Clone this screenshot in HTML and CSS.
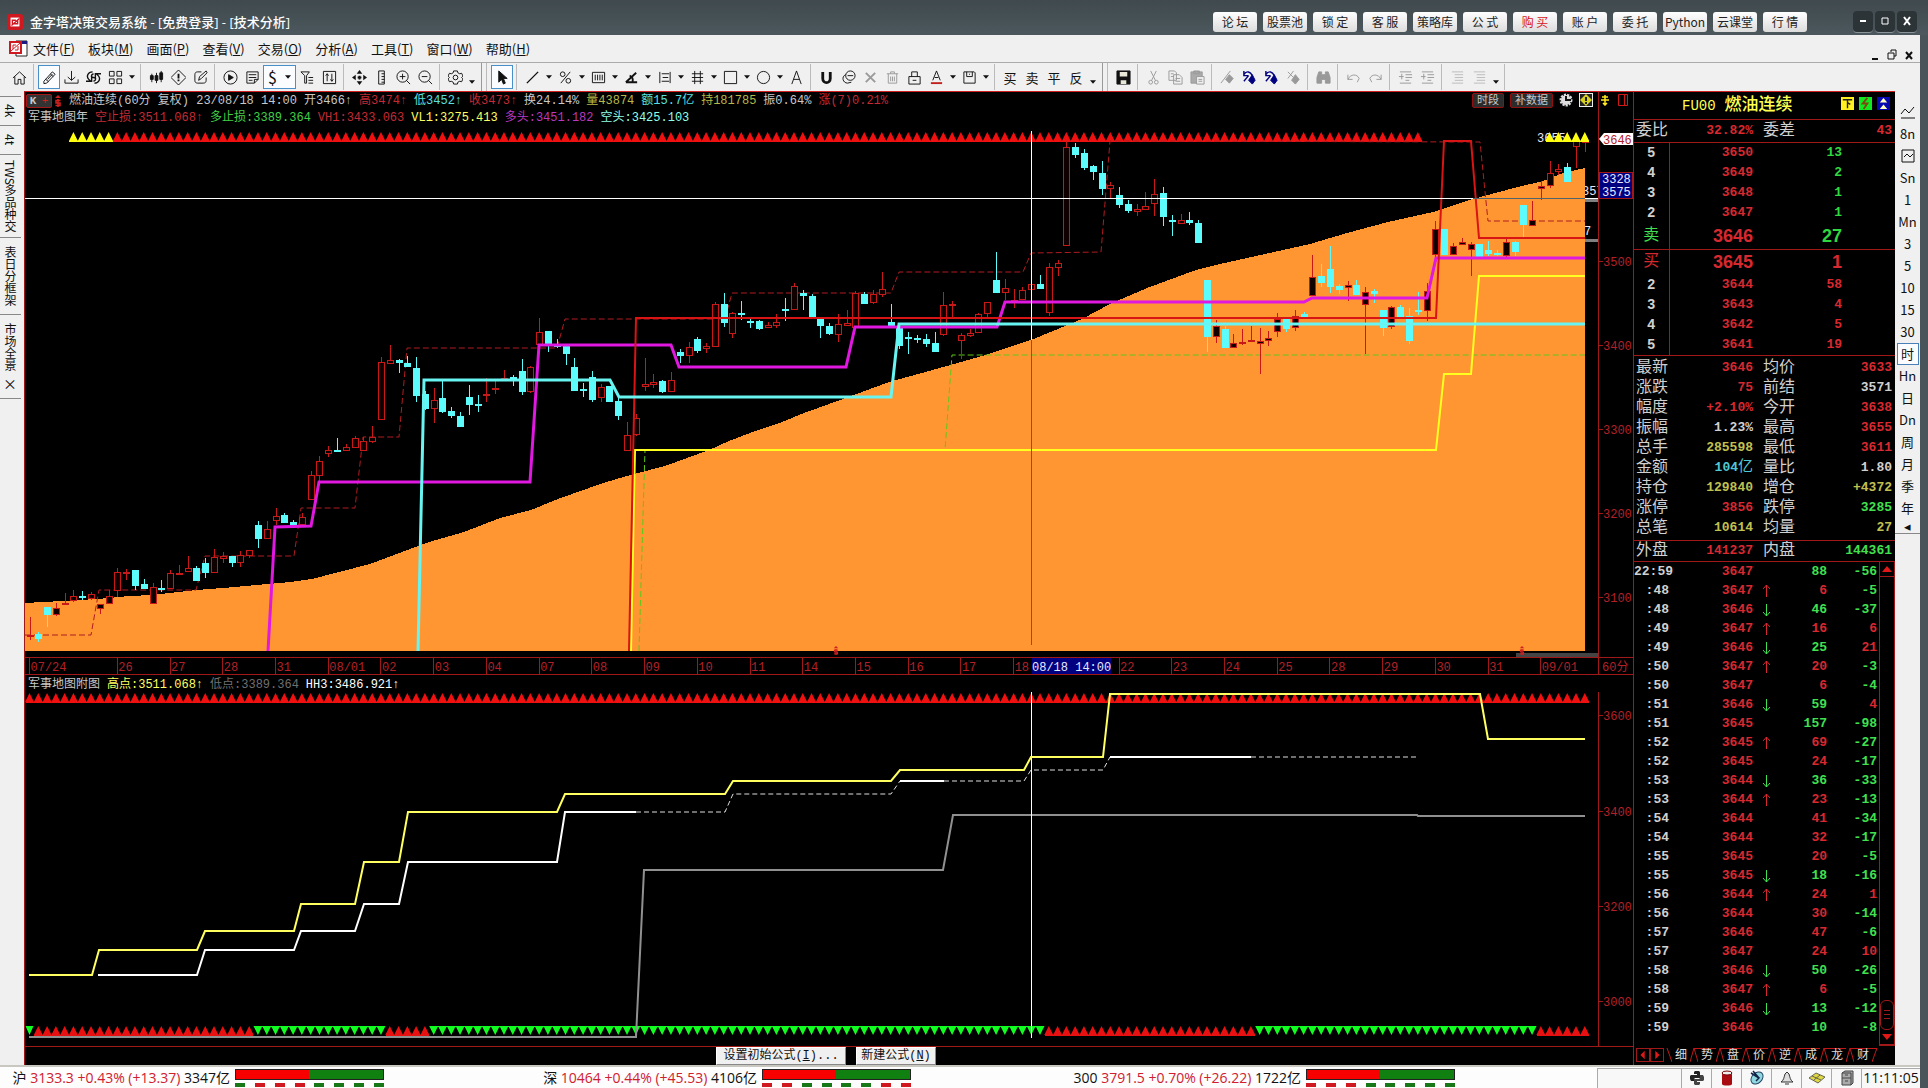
FILE: index.html
```html
<!DOCTYPE html>
<html lang="zh-CN">
<head>
    <meta charset="UTF-8">
    <meta name="viewport" content="width=device-width, initial-scale=1.0">
    <title>金字塔决策交易系统</title>
    <link rel="stylesheet" href="styles.css">
</head>
<body>
    <svg class="sprite" aria-hidden="true">
        <symbol id="home" viewBox="0 0 16 16"><path d="M1 8.500L8 2l7 6.500M3 7v8h3.500v-5h3v5H13V7"/></symbol>
        <symbol id="pencil" viewBox="0 0 16 16"><path d="M2 12l9-10 3 2.500L5 14l-3 .5zM4 10l3 2.500M9 4.500l3 2.500M6 10l5-5.500"/></symbol>
        <symbol id="down" viewBox="0 0 16 16"><path d="M8 1v10M4 7.500L8 11l4-3.500M1 10v4h14v-4"/></symbol>
        <symbol id="refresh" viewBox="0 0 16 16"><path d="M7 2C2 2 0 7 3 10l2 2M0 12h6V7M9 14c5 0 7-5 4-8l-2-2M16 4h-6v5M8 4c-3 1-3 4 0 4s3 3 0 4" stroke-width="1.500"/></symbol>
        <symbol id="grid4" viewBox="0 0 16 16"><path d="M1.500 1.500h5v5h-5zM9.500 1.500h5v5h-5zM1.500 9.500h5v5h-5zM9.500 9.500h5v5h-5z"/></symbol>
        <symbol id="candles" viewBox="0 0 16 16"><path d="M3 4v9M8 3v11M13 1v12"/><path class="f" d="M1.500 6h3v4h-3zM6.500 6h3v5h-3zM11.500 3h3v7h-3z"/></symbol>
        <symbol id="alert" viewBox="0 0 16 16"><path d="M8 0l8 8-8 8-8-8z"/><path d="M8 4v5M8 10v2" stroke-width="2"/></symbol>
        <symbol id="edit" viewBox="0 0 16 16"><path d="M9 2H5C3 2 2 3 2 5v6c0 2 1 3 3 3h6c2 0 3-1 3-3V8M6 11l1-4 7-6 1 2-6 6z"/></symbol>
        <symbol id="play" viewBox="0 0 16 16"><circle cx="8" cy="8" r="7"/><path class="f" d="M6 5l5 3-5 3z"/></symbol>
        <symbol id="note" viewBox="0 0 16 16"><path d="M10 14H2V2h12v8zM10 14v-4h4M4 5h8M4 8h8M4 11h4"/></symbol>
        <symbol id="filter" viewBox="0 0 16 16"><path d="M1 2h9L7 6v8H5V6zM9 8h5M9 11h5M9 14h5"/></symbol>
        <symbol id="updown" viewBox="0 0 16 16"><path d="M1.500 1.500h13v13h-13zM5.500 12V4M4 6l1.500-2L7 6M10.500 4v8M9 10l1.500 2 1.500-2"/></symbol>
        <symbol id="move" viewBox="0 0 16 16"><path class="f" d="M8 0l3 4H5zM8 16l3-4H5zM0 8l4-3v6zM16 8l-4-3v6zM7 6h2v1h1v2H9v1H7V9H6V7h1z" stroke="none"/></symbol>
        <symbol id="ruler" viewBox="0 0 16 16"><path d="M5 1h6v14H5zM8 4h3M8 7h3M8 10h3M8 13h3"/></symbol>
        <symbol id="zin" viewBox="0 0 16 16"><circle cx="7" cy="7" r="6"/><path d="M11 11l4 4M4 7h6M7 4v6"/></symbol>
        <symbol id="zout" viewBox="0 0 16 16"><circle cx="7" cy="7" r="6"/><path d="M11 11l4 4M4 7h6"/></symbol>
        <symbol id="gear" viewBox="0 0 16 16"><path d="M6 1h4l.5 2 2 1 2-.5 1.500 3L14.500 8l1.500 1.500-1.500 3-2-.5-2 1-.5 2H6l-.5-2-2-1-2 .5-1.500-3L1.500 8 0 6.500l1.500-3 2 .5 2-1z"/><circle cx="8" cy="8" r="2.500"/></symbol>
        <symbol id="cursor" viewBox="0 0 16 16"><path class="f" d="M4 1l9 8H9l2 5-2 1-2-5-3 3z"/></symbol>
        <symbol id="line" viewBox="0 0 16 16"><path d="M2 14L14 2" stroke-width="1.500"/></symbol>
        <symbol id="percent" viewBox="0 0 16 16"><circle cx="5" cy="4.500" r="2.500"/><circle cx="11" cy="11.500" r="2.500"/><path d="M13 2L3 14"/></symbol>
        <symbol id="bars" viewBox="0 0 16 16"><path d="M1.500 2.500h13v11h-13zM4.500 5v6M7 5v6M9.500 5v6M12 5v6"/></symbol>
        <symbol id="angle" viewBox="0 0 16 16"><path d="M2 13h12M2 13L13 3M6 6c3 1 4 4 3 7" stroke-width="2"/></symbol>
        <symbol id="levels" viewBox="0 0 16 16"><path d="M3 2v12M5 4h8M6 8h6M5 12h8M14 2v12"/></symbol>
        <symbol id="hash" viewBox="0 0 16 16"><path d="M5 1v14M11 1v14M2 4h12M2 8h12M2 12h12"/></symbol>
        <symbol id="rect" viewBox="0 0 16 16"><path d="M1.500 1.500h13v13h-13z"/></symbol>
        <symbol id="circle" viewBox="0 0 16 16"><circle cx="8" cy="8" r="6.500"/></symbol>
        <symbol id="letter" viewBox="0 0 16 16"><path d="M3 15L8 1l5 14M5 10h6"/></symbol>
        <symbol id="magnet" viewBox="0 0 16 16"><path d="M4 2v7c0 6 8 6 8 0V2" stroke-width="3"/></symbol>
        <symbol id="link" viewBox="0 0 16 16"><circle cx="10" cy="6" r="5"/><path d="M5 5C0 7 2 14 7 14l4-1M7 6h6"/></symbol>
        <symbol id="cross" viewBox="0 0 16 16"><path d="M3 3l10 10M13 3L3 13" stroke-width="2"/></symbol>
        <symbol id="trash" viewBox="0 0 16 16"><path d="M2 4h12M6 4V2h4v2M3.500 4v10h9V4M6 7v5M8 7v5M10 7v5"/></symbol>
        <symbol id="lock" viewBox="0 0 16 16"><path d="M2 7h12v8H2zM5 7V2h6v5M6 11h4"/></symbol>
        <symbol id="color" viewBox="0 0 16 16"><path d="M4 11L8 1l4 10M6 8h4"/><path d="M2 14h12" stroke="#c02020" stroke-width="2"/></symbol>
        <symbol id="keep" viewBox="0 0 16 16"><path d="M2 2h11l1 1v11H2zM5 2v5h6V2M8 4v1"/></symbol>
        <symbol id="floppy" viewBox="0 0 16 16"><path class="f" d="M1 1h14v14H1z"/><path d="M4 2h8v5H4zM5 11h6v4H5z" fill="#e8e8d8" stroke="none"/></symbol>
        <symbol id="cut" viewBox="0 0 16 16"><path d="M5 1l5 10M11 1L6 11"/><circle cx="5" cy="13" r="2"/><circle cx="11" cy="13" r="2"/></symbol>
        <symbol id="copy" viewBox="0 0 16 16"><path d="M1 1h6l2 2v8H1zM6 5h6l3 3v7H6zM8 9h5M8 12h5M3 4h3M3 7h3"/></symbol>
        <symbol id="paste" viewBox="0 0 16 16"><path d="M1 2h12v12H1zM4 1h6v3H4z" fill="#aaa"/><path d="M7 7h8v8H7zM9 10h4M9 12h4" fill="#f0f0f0"/></symbol>
        <symbol id="flag" viewBox="0 0 16 16"><path d="M1 14L11 1"/><path class="f" d="M10 5l4 4-4 5-4-4z"/></symbol>
        <symbol id="flagr" viewBox="0 0 16 16"><path d="M2 5c3-5 7-3 9 1M2 1v5h5M2 12l5-6" stroke-width="1.500"/><path class="f" d="M11 5l3 6-3 4-4-4z"/></symbol>
        <symbol id="flagx" viewBox="0 0 16 16"><path d="M2 2l6 6M8 1L2 9"/><path class="f" d="M10 5l4 5-4 5-4-4z"/></symbol>
        <symbol id="find" viewBox="0 0 16 16"><path class="f" d="M3 2h3v3h4V2h3l2 6v6h-5v-4H6v4H1V8z"/></symbol>
        <symbol id="undo" viewBox="0 0 16 16"><path d="M2 5v5h5M2 10c3-6 10-6 12-1l-2 4"/></symbol>
        <symbol id="redo" viewBox="0 0 16 16"><path d="M14 5v5H9M14 10C11 4 4 4 2 9l2 4"/></symbol>
        <symbol id="indent" viewBox="0 0 16 16"><path d="M2 2h12M8 5h7M8 8h7M8 11h4M2 14h12M1 7h5M4 4v6" /></symbol>
        <symbol id="list" viewBox="0 0 16 16"><path d="M2 2h12M5 5h9M5 8h9M5 11h9M2 14h12" stroke="#bbb"/></symbol>
        <symbol id="logo" viewBox="0 0 18 18"><rect width="18" height="18" rx="3" fill="#d01820"/><path d="M4 4h10v10H4z" fill="#fff" stroke="none"/><path d="M6 11V7h4M12 7v4H8M5 13L14 5" stroke="#d01820" stroke-width="1.500"/></symbol>
        <symbol id="signal" viewBox="0 0 8 12"><path d="M1 3l3-3 3 3z" fill="#d02020"/><path d="M6.500 5.500H2v2.500h4v2.500H1.500M4 4v8" stroke="#d02020" stroke-width="1.500"/></symbol>
    </svg>

    <header class="titlebar">
        <svg class="logo"><use href="#logo"/></svg>
        <h1>金字塔决策交易系统 - [免费登录] - [技术分析]</h1>
        <nav class="quick">
            <button>论 坛</button><button>股票池</button><button>锁 定</button><button>客 服</button><button>策略库</button><button>公 式</button><button class="buy">购 买</button><button>账 户</button><button>委 托</button><button>Python</button><button>云课堂</button><button>行 情</button>
        </nav>
        <div class="winbtns">
            <button aria-label="最小化"><svg viewBox="0 0 10 10"><path d="M2 5h6" stroke-width="2"/></svg></button>
            <button aria-label="最大化"><svg viewBox="0 0 10 10"><path d="M2 2h6v6H2z"/></svg></button>
            <button aria-label="关闭"><svg viewBox="0 0 10 10"><path d="M2 1l6 8M8 1L2 9" stroke-width="2"/></svg></button>
        </div>
    </header>

    <div class="frame">
        <div class="menubar">
            <svg class="doc" viewBox="0 0 20 18"><path d="M8 1h11v15H8z" fill="#fff" stroke="#222"/><path d="M8 1h11v3H8z" fill="#1a1a80"/><path d="M1 1h13v13H1z" fill="#d01820"/><path d="M3 3h9v9H3z" fill="#fff"/><path d="M3 11l9-8M5 9V5h3M10 6v4H7" stroke="#d01820" fill="none"/></svg>
            <button>文件(<u>F</u>)</button><button>板块(<u>M</u>)</button><button>画面(<u>P</u>)</button><button>查看(<u>V</u>)</button><button>交易(<u>O</u>)</button><button>分析(<u>A</u>)</button><button>工具(<u>T</u>)</button><button>窗口(<u>W</u>)</button><button>帮助(<u>H</u>)</button>
            <svg class="mdi" viewBox="0 0 46 14"><path d="M2 11h6" stroke-width="2"/><path d="M21 4V2h5v6h-2M18 5h6v6h-6z"/><path d="M36 4l6 7M42 4l-6 7" stroke-width="2"/></svg>
        </div>

        <div class="toolbar" id="toolbar"></div>

        <main class="workspace">
            <nav class="pages">
                <button>4k</button>
                <button>4t</button>
                <button class="p3">TWS多品种交</button>
                <button class="p4">表日分框架</button>
                <button class="p5">市场全景<span>×</span></button>
            </nav>

            <section class="charts">
                <div class="chart-head">
                    <div class="legend">
                        <div class="row">
                            <span class="badges"><span class="kbadge"><b>K</b><i>+</i></span><svg><use href="#signal"/></svg></span>
                            <span>燃油连续(60分 复权) 23/08/18 14:00</span>
                            <span>开3466↑</span><span class="red">高3474↑</span><span class="cyan">低3452↑</span><span class="red">收3473↑</span><span>换24.14%</span><span class="olive">量43874</span><span class="cyan">额15.7亿</span><span class="olive">持181785</span><span>振0.64%</span><span class="red">涨(7)0.21%</span>
                        </div>
                        <div class="row">
                            <span>军事地图年</span><span class="red">空止损:3511.068↑</span><span class="green">多止损:3389.364</span><span class="red">VH1:3433.063</span><span class="yellow">VL1:3275.413</span><span class="purple">多头:3451.182</span><span class="aqua">空头:3425.103</span>
                        </div>
                    </div>
                    <div class="head-tools">
                        <button>时段</button><button>补数据</button>
                        <svg viewBox="0 0 14 14"><circle cx="7" cy="7" r="5" fill="#ddd" stroke="#ddd" stroke-width="3" stroke-dasharray="2 1"/><path d="M7 3v4h5" stroke="#111" stroke-width="2" fill="none"/></svg>
                        <svg viewBox="0 0 14 14"><path d="M0 0h14v14H0z" fill="#222" stroke="#eee" stroke-width="2"/><path d="M7 1l6 6-6 6-6-6z" fill="#d8d020"/><path d="M7 4v4M7 9v2" stroke="#222" stroke-width="2"/></svg>
                    </div>
                    <div class="head-axis">
                        <svg viewBox="0 0 12 12"><path d="M6 1v10M3 3h6M2 6h8M4 9l2 2 2-2" stroke="#ffe820" stroke-width="1.500" fill="none"/></svg>
                        <svg viewBox="0 0 12 12"><path d="M1.500.5h9v11h-9zM7.500.5v11" stroke="#d01818" fill="none"/></svg>
                    </div>
                </div>
                <svg id="main" class="plot" viewBox="25 125 1608 550"></svg>
                <div class="row sub-head">
                    <span>军事地图附图</span><span class="yellow">高点:3511.068↑</span><span class="gray">低点:3389.364</span><span class="white">HH3:3486.921↑</span>
                </div>
                <svg id="sub" class="plot" viewBox="25 692 1608 354"></svg>
                <div class="chart-foot">
                    <button class="wide">设置初始公式(<u>I</u>)...</button><button>新建公式(<u>N</u>)</button>
                </div>
            </section>

            <aside class="quote">
                <div class="symbol">
                    <span class="code">FU00</span><strong>燃油连续</strong>
                    <div class="flags">
                        <svg viewBox="0 0 14 14"><path d="M0 0h14v14H0z" fill="#ffee20"/><path d="M2 3h10M7 3v9M7 6l3 2" stroke="#222" stroke-width="1.500" fill="none"/></svg>
                        <svg viewBox="0 0 14 14"><path d="M0 0h14v14H0z" fill="#10e820"/><path d="M9 1L4 7h5l-4 6" stroke="#7a4a10" stroke-width="2" fill="none"/></svg>
                        <svg viewBox="0 0 14 14"><path d="M0 0h14v14H0z" fill="#0808b0"/><path d="M7 1l4 5H3zM7 8l4 5H3z" fill="#ffffc0"/></svg>
                    </div>
                </div>
                <table class="info ratio">
                    <tr><th>委比</th><td class="r">32.82%</td><th>委差</th><td class="r">43</td></tr>
                </table>
                <table class="book">
                    <tr><th>5</th><td>3650</td><td class="g">13</td><td></td></tr>
                    <tr><th>4</th><td>3649</td><td class="g">2</td><td></td></tr>
                    <tr><th>3</th><td>3648</td><td class="g">1</td><td></td></tr>
                    <tr><th>2</th><td>3647</td><td class="g">1</td><td></td></tr>
                    <tr class="best ask"><th class="g">卖</th><td>3646</td><td class="g">27</td><td></td></tr>
                    <tr class="best bid"><th class="r">买</th><td>3645</td><td>1</td><td></td></tr>
                    <tr><th>2</th><td>3644</td><td>58</td><td></td></tr>
                    <tr><th>3</th><td>3643</td><td>4</td><td></td></tr>
                    <tr><th>4</th><td>3642</td><td>5</td><td></td></tr>
                    <tr><th>5</th><td>3641</td><td>19</td><td></td></tr>
                </table>
                <table class="info">
                    <tr><th>最新</th><td class="r">3646</td><th>均价</th><td class="r">3633</td></tr>
                    <tr><th>涨跌</th><td class="r">75</td><th>前结</th><td>3571</td></tr>
                    <tr><th>幅度</th><td class="r">+2.10%</td><th>今开</th><td class="r">3638</td></tr>
                    <tr><th>振幅</th><td>1.23%</td><th>最高</th><td class="r">3655</td></tr>
                    <tr><th>总手</th><td class="y">285598</td><th>最低</th><td class="r">3611</td></tr>
                    <tr><th>金额</th><td class="c">104<em>亿</em></td><th>量比</th><td>1.80</td></tr>
                    <tr><th>持仓</th><td class="y">129840</td><th>增仓</th><td class="y">+4372</td></tr>
                    <tr><th>涨停</th><td class="r">3856</td><th>跌停</th><td class="g">3285</td></tr>
                    <tr><th>总笔</th><td class="y">10614</td><th>均量</th><td class="y">27</td></tr>
                </table>
                <table class="info sides">
                    <tr><th>外盘</th><td class="r">141237</td><th>内盘</th><td class="g">144361</td></tr>
                </table>
                <div class="tape">
                    <table id="ticks"></table>
                    <div class="scroll">
                        <button aria-label="上"><svg viewBox="0 0 14 14"><path d="M7 4l5 6H2z"/></svg></button>
                        <span class="thumb"></span>
                        <button aria-label="下"><svg viewBox="0 0 14 14"><path d="M7 10l5-6H2z"/></svg></button>
                    </div>
                </div>
                <nav class="qtabs" id="qtabs">
                    <button class="nav" aria-label="左"><svg viewBox="0 0 14 14"><path d="M4 7l5-5v10z"/></svg></button>
                    <button class="nav" aria-label="右"><svg viewBox="0 0 14 14"><path d="M10 7L5 2v10z"/></svg></button>
                    <svg class="edge" viewBox="0 0 8 14"><path d="M3 0l5 14"/></svg>
                </nav>
            </aside>

            <nav class="periods">
                <button aria-label="分时"><svg viewBox="0 0 16 16"><path d="M1 10l4-5 4 4 5-6M1 14h14"/></svg></button>
                <button>8n</button>
                <button aria-label="走势"><svg viewBox="0 0 16 16"><path d="M2 2h12v12H2zM4 9l3-3 3 3 3-3"/></svg></button>
                <button>Sn</button><button>1</button><button>Mn</button><button>3</button><button>5</button><button>10</button><button>15</button><button>30</button>
                <button class="on">时</button>
                <button>Hn</button><button>日</button><button>Dn</button><button>周</button><button>月</button><button>季</button><button>年</button>
                <button class="fold">◂</button>
            </nav>
        </main>
    </div>

    <footer class="status">
        <div class="index">
            <span>沪 <b>3133.3 +0.43% (+13.37)</b> 3347亿</span>
            <div class="meter"><div class="bar"></div><div class="dots"><i class="up"></i><i class="dn"></i><i class="dn"></i><i class="dn"></i><i class="up"></i><i class="up"></i><i class="up"></i><i class="up"></i></div></div>
        </div>
        <div class="index">
            <span>深 <b>10464 +0.44% (+45.53)</b> 4106亿</span>
            <div class="meter"><div class="bar"></div><div class="dots"><i class="dn"></i><i class="dn"></i><i class="up"></i><i class="up"></i><i class="up"></i><i class="up"></i><i class="dn"></i><i class="dn"></i></div></div>
        </div>
        <div class="index">
            <span>300 <b>3791.5 +0.70% (+26.22)</b> 1722亿</span>
            <div class="meter"><div class="bar"></div><div class="dots"><i class="dn"></i><i class="dn"></i><i class="dn"></i><i class="up"></i><i class="up"></i><i class="up"></i><i class="up"></i><i class="up"></i></div></div>
        </div>
        <div class="cell blank"></div>
        <div class="cell"><svg viewBox="0 0 16 16"><path d="M6 1h4l1 1v6H6L5 9v2H2L1 9V6l1-1h6V4H5V2z" fill="#222"/><path d="M10 15H6l-1-1V9h5l1-1V5h3l1 2v3l-1 1H8v1h3v2z" fill="#444"/></svg></div>
        <div class="cell"><svg viewBox="0 0 16 16"><path d="M3 3h10v11c0 2-10 2-10 0z" fill="#a80c10"/><ellipse cx="8" cy="3" rx="5" ry="2" fill="#eee" stroke="#700"/></svg></div>
        <div class="cell"><svg viewBox="0 0 16 16"><ellipse cx="8" cy="8" rx="7" ry="5" fill="#90d8e0" stroke="#246" transform="rotate(-45 8 8)"/><path d="M2 3l8 5-3 3M4 1l6 7" stroke="#124" stroke-width="1.500" fill="none"/></svg></div>
        <div class="cell"><svg viewBox="0 0 16 16"><path d="M2 12c3-2 3-5 4-8l2-2 2 2c1 3 1 6 4 8zM6 14h4" fill="#ddd" stroke="#333"/></svg></div>
        <div class="cell"><svg viewBox="0 0 16 16"><path d="M0 8l7-5 9 4-7 6z" fill="#e0d840" stroke="#665"/><path d="M3 6l9 4M11 5L5 10" stroke="#665"/></svg></div>
        <div class="cell"><svg viewBox="0 0 16 16"><path d="M3 3l3-2h8v12l-2 2H3z" fill="#aaa" stroke="#444"/><path d="M3 3h9v12M3 8h9M6 5h3M6 11h3" stroke="#444" fill="none"/></svg></div>
        <time class="cell clock">11:11:05</time>
    </footer>
    <script src="chart.js"></script>
</body>
</html>
```

FILE: styles.css
```css
* {
    box-sizing: border-box;
}
body {
    margin: 0;
    background-color: #48545a;
    font-family: "Noto Sans CJK SC", sans-serif;
    font-size: 13px;
    color: #111;
}
button {
    border: 0;
    padding: 0;
    margin: 0;
    background: none;
    font: inherit;
    color: inherit;
    white-space: nowrap;
}
svg {
    display: block;
    fill: none;
    stroke: none;
}
table {
    border-collapse: collapse;
    table-layout: fixed;
    width: 100%;
}
th, td {
    padding: 0;
    font-weight: normal;
}
.sprite {
    position: absolute;
    width: 0;
    height: 0;
}

/* title bar */
.titlebar {
    display: flex;
    align-items: center;
    height: 35px;
    padding: 8px 11px 0 7px;
    background: linear-gradient(#3f494e, #4c585d);
    color: #fff;
}
.logo {
    width: 16px;
    height: 16px;
    margin-right: 7px;
}
.titlebar h1 {
    margin: 0;
    font-family: "Open Sans", "Noto Sans CJK SC", sans-serif;
    font-size: 13px;
    font-weight: 500;
    line-height: 18px;
}
.quick {
    display: flex;
    gap: 6px;
    margin-left: auto;
    margin-right: 46px;
}
.quick button {
    width: 44px;
    height: 20px;
    border-radius: 3px;
    background: linear-gradient(#fff, #dcdcdc);
    color: #222;
    font-size: 12px;
    line-height: 18px;
}
.quick .buy {
    color: #d81818;
}
.winbtns {
    display: flex;
    gap: 2px;
}
.winbtns button {
    width: 20px;
    height: 22px;
    border-radius: 4px;
    border-bottom: 1px solid #8a9599;
    background-color: #2c3438;
}
.winbtns svg {
    width: 10px;
    height: 10px;
    margin: 0 auto;
    stroke: #fff;
}

/* menu and tool bars */
.frame {
    margin-right: 8px;
    background-color: #f0f0f0;
}
.menubar {
    display: flex;
    align-items: center;
    gap: 13px;
    height: 28px;
    padding: 0 4px 0 8px;
    border-bottom: 1px solid #aaa;
}
.menubar button {
    line-height: 20px;
}
.doc {
    width: 20px;
    height: 18px;
    margin-right: -8px;
}
.mdi {
    width: 46px;
    height: 14px;
    align-self: flex-end;
    margin-left: auto;
    stroke: #111;
}
.toolbar {
    display: flex;
    align-items: center;
    height: 28px;
    padding-left: 8px;
}
.toolbar button {
    display: flex;
    align-items: center;
    justify-content: center;
    width: 22px;
    height: 24px;
    font-size: 13px;
}
.toolbar button svg {
    width: 15px;
    height: 15px;
    stroke: #111;
}
.sprite .f {
    fill: currentColor;
}
.toolbar .dim svg {
    stroke: #999;
    color: #999;
}
.toolbar .navy svg {
    stroke: #000080;
    color: #000080;
}
.toolbar .on {
    border: 1px solid #4a90c8;
    background-color: #fafcff;
}
.toolbar .caret {
    width: 11px;
}
.toolbar .caret svg,
.toolbar .wide svg {
    width: 6px;
    height: 4px;
    fill: #111;
    stroke: none;
}
.toolbar .low {
    align-items: flex-end;
    padding-bottom: 5px;
}
.toolbar .wide {
    width: 33px;
    gap: 8px;
    font-size: 16px;
}
.sep {
    width: 8px;
    height: 26px;
    background: linear-gradient(#bbb, #bbb) 3px 0 / 1px 100% no-repeat;
}
.split {
    width: 14px;
    height: 28px;
    background: linear-gradient(#999, #999) 4px 0 / 1px 100% no-repeat, linear-gradient(#bbb, #bbb) 9px 0 / 1px 100% no-repeat;
}

/* workspace */
.workspace {
    display: flex;
    align-items: stretch;
}
.pages {
    display: flex;
    flex-direction: column;
    width: 24px;
    padding: 5px 3px 0 0;
    font-size: 12px;
}
.pages button {
    writing-mode: vertical-rl;
    width: 21px;
    height: 29px;
    border-top: 1px solid #888;
    line-height: 21px;
    text-align: center;
}
.pages .p3 {
    height: 83px;
}
.pages .p4 {
    height: 77px;
}
.pages .p5 {
    height: 85px;
    border-bottom: 1px solid #888;
}
.pages span {
    margin-top: 6px;
    font-size: 14px;
}
.charts {
    flex: 1;
    min-width: 0;
    border-top: 1px solid #d02020;
    border-left: 1px solid #a01818;
    background-color: #000;
    color: #c8c8c8;
    font-family: "Liberation Mono", "Noto Sans CJK SC", monospace;
    font-size: 12px;
}
.chart-head {
    display: flex;
    height: 33px;
}
.legend {
    flex: 1;
    min-width: 0;
}
.row {
    display: flex;
    gap: 7px;
    height: 17px;
    padding-left: 3px;
    line-height: 19px;
    white-space: nowrap;
}
.sub-head {
    line-height: 20px;
}
.badges {
    display: flex;
    align-items: center;
    gap: 2px;
    margin-left: -2px;
}
.badges svg {
    width: 8px;
    height: 12px;
}
.kbadge {
    display: flex;
    justify-content: space-around;
    width: 26px;
    height: 14px;
    border: 1px solid #a01818;
    border-radius: 2px;
    background-color: #333;
    line-height: 12px;
    font-size: 11px;
}
.kbadge i {
    color: #d02020;
}
.red { color: #c42a34; }
.cyan { color: #58e0e0; }
.aqua { color: #90ffe8; }
.olive { color: #b8b848; }
.green { color: #40d048; }
.yellow { color: #ffff60; }
.purple { color: #b838c0; }
.gray { color: #707070; }
.white { color: #fff; }
.head-tools {
    display: flex;
    gap: 6px;
    padding: 1px 5px 0 0;
}
.head-tools button {
    height: 15px;
    padding: 0 4px;
    border: 1px solid #901010;
    border-radius: 2px;
    background-color: #2c2c2c;
    font-size: 11px;
    line-height: 12px;
}
.head-tools svg {
    width: 14px;
    height: 14px;
}
.head-axis {
    display: flex;
    justify-content: space-between;
    width: 35px;
    padding: 2px 4px 0 0;
    border-left: 1px solid #a01818;
}
.head-axis svg {
    width: 12px;
    height: 12px;
}
.plot {
    width: 100%;
    height: auto;
}
.plot text {
    fill: #b42028;
}
.plot .hot {
    fill: #e8e8ff;
}
.chart-foot {
    display: flex;
    justify-content: center;
    gap: 10px;
    height: 19px;
    padding: 0 6px 0 0;
    border-top: 1px solid #a01818;
}
.chart-foot button {
    width: 80px;
    height: 18px;
    border: 1px solid #fff;
    border-right-color: #888;
    border-bottom-color: #888;
    background-color: #f0f0f0;
    color: #111;
    line-height: 15px;
}
.chart-foot .wide {
    width: 130px;
}

/* quote panel */
.quote {
    display: flex;
    flex-direction: column;
    width: 262px;
    border-left: 1px solid #a01818;
    border-top: 1px solid #d02020;
    background-color: #000;
    color: #d0d0d0;
    font-family: "Liberation Mono", "Noto Sans CJK SC", monospace;
}
.symbol {
    display: flex;
    align-items: center;
    gap: 9px;
    height: 27px;
    padding: 0 5px 0 48px;
    color: #ffff50;
}
.symbol .code {
    font-size: 14px;
}
.symbol strong {
    font-size: 17px;
    font-weight: 500;
    line-height: 20px;
}
.flags {
    display: flex;
    gap: 5px;
    margin-left: auto;
    margin-bottom: 4px;
}
.flags svg {
    width: 13px;
    height: 13px;
}
.info {
    margin: 2px 0;
}
.info th {
    width: 44px;
    height: 20px;
    padding-left: 2px;
    font-size: 16px;
    line-height: 20px;
    text-align: left;
}
.info th + td + th {
    width: 54px;
    padding-left: 10px;
}
.info td {
    width: 75px;
    font-size: 13px;
    font-weight: bold;
    line-height: 20px;
    text-align: right;
}
.info td:last-child {
    width: 88px;
    padding-right: 3px;
}
.info em {
    font-style: normal;
    font-weight: normal;
    font-size: 15px;
}
.ratio {
    margin: 0;
    border-top: 1px solid #a01818;
    border-bottom: 1px solid #a01818;
}
.ratio th {
    height: 23px;
}
.sides {
    margin: 0;
    border-top: 1px solid #a01818;
    border-bottom: 1px solid #a01818;
}
.r { color: #d82830; }
.g { color: #40e050; }
.y { color: #c0c050; }
.c { color: #50c8d8; }
.book {
    border-bottom: 1px solid #a01818;
}
.book th {
    width: 35px;
    height: 20px;
    border-right: 1px solid #a01818;
    font-size: 14px;
    font-weight: bold;
    line-height: 20px;
}
.book td {
    width: 84px;
    color: #d82830;
    font-size: 13px;
    font-weight: bold;
    line-height: 20px;
    text-align: right;
}
.book td:nth-child(3) {
    width: 89px;
}
.book td.g {
    color: #30d840;
}
.book td:last-child {
    width: auto;
}
.book .best th {
    height: 26px;
    font-size: 16px;
    font-weight: normal;
}
.book .best td {
    font-family: "Liberation Sans", sans-serif;
    font-size: 18px;
}
.book .bid {
    border-top: 1px solid #a01818;
}
.tape {
    display: flex;
    flex: 1;
}
#ticks {
    flex: 1;
    align-self: flex-start;
}
#ticks td {
    height: 19px;
    font-size: 13px;
    font-weight: bold;
    line-height: 18px;
    text-align: right;
}
#ticks td:nth-child(1) { width: 35px; }
#ticks td:nth-child(2) { width: 84px; }
#ticks td:nth-child(3) { width: 22px; }
#ticks td:nth-child(4) { width: 52px; }
#ticks td:nth-child(5) { padding-right: 2px; }
#ticks svg {
    width: 9px;
    height: 14px;
    margin-left: 9px;
    stroke: currentColor;
}
.scroll {
    display: flex;
    flex-direction: column;
    width: 16px;
    border: 1px solid #a01818;
    border-top: 0;
}
.scroll button {
    height: 15px;
    border-bottom: 1px solid #a01818;
}
.scroll svg, .qtabs .nav svg {
    width: 14px;
    height: 14px;
    fill: #e01818;
}
.thumb {
    height: 30px;
    margin-top: auto;
    border: 1px solid #a01818;
    border-radius: 6px;
    background: repeating-linear-gradient(#a01818 0 1px, #000 1px 4px) 3px 9px / 6px 10px no-repeat;
}
.qtabs {
    display: flex;
    height: 19px;
    padding: 2px 0 3px 2px;
    color: #ddd;
    font-size: 12px;
}
.qtabs .nav {
    width: 14px;
    height: 14px;
    border: 1px solid #a01818;
}
.qtabs .nav svg {
    width: 12px;
    height: 12px;
}
.qtabs .edge {
    width: 8px;
    height: 14px;
    stroke: #c01818;
}
.qtabs .tab {
    width: 18px;
    height: 14px;
    line-height: 14px;
    border-top: 1px solid #c01818;
}
.qtabs .first {
    border-top-color: #000;
}

/* period bar */
.periods {
    display: flex;
    flex-direction: column;
    align-items: center;
    align-self: flex-start;
    width: 25px;
    padding-top: 10px;
    border-bottom: 1px solid #888;
    font-size: 13px;
}
.periods button {
    width: 22px;
    height: 22px;
    line-height: 20px;
    text-align: center;
}
.periods svg {
    width: 16px;
    height: 16px;
    margin: 0 auto;
    stroke: #111;
}
.periods .on {
    border: 1px solid #4a80b8;
    background-color: #fafcff;
}
.periods .fold {
    height: 14px;
    line-height: 12px;
}

/* status bar */
.status {
    display: flex;
    align-items: center;
    height: 23px;
    margin-right: 8px;
    border-top: 2px solid #c8c8c0;
    background-color: #fdfdfd;
    font-family: "Open Sans", "Noto Sans CJK SC", sans-serif;
    font-size: 14px;
}
.index {
    display: flex;
    align-items: center;
    justify-content: flex-end;
    gap: 5px;
    width: 384px;
}
.index + .index {
    width: 527px;
}
.index + .index + .index {
    width: 544px;
}
.index b {
    color: #d02030;
    font-weight: normal;
}
.index span {
    line-height: 20px;
}
.meter {
    width: 149px;
}
.bar {
    height: 11px;
    border: 1px solid #222;
    background: linear-gradient(90deg, #f80000 50%, #108010 50%);
}
.dots {
    display: flex;
    justify-content: space-between;
    padding-top: 3px;
}
.dots i {
    width: 10px;
    height: 4px;
}
.dots .up { background-color: #187818; }
.dots .dn { background-color: #d01820; }
.cell {
    width: 30px;
    height: 20px;
    border-left: 1px solid #aaa;
    border-top: 1px solid #aaa;
    background-color: #f8f8f8;
}
.cell svg {
    width: 16px;
    height: 16px;
    margin: 1px auto;
}
.cell.blank {
    width: 84px;
    margin-left: auto;
}
.clock {
    width: 59px;
    line-height: 18px;
    text-align: center;
}
```

FILE: chart.js
```js
// toolbar: "|" separator, "||" group split, "v" drop-down arrow, "o" overflow arrow
const tools = 'home | pencil:on down refresh grid4 v | candles alert edit | play note $ filter updown | move ruler zin zout | gear o || cursor:on | line v percent v bars v angle v levels v hash v rect v circle v letter | magnet link cross:dim trash:dim lock color v keep v | 买 卖 平 反 o || floppy | cut:dim copy:dim paste:dim | flag:dim flagr:navy flagr:navy flagx:dim | find:dim | undo:dim redo:dim | indent:dim indent:dim | list:dim list:dim o |';
const caret = '<svg viewBox="0 0 7 4"><path d="M0 0h7L3.500 4z"/></svg>';
document.getElementById('toolbar').innerHTML = tools.split(' ').map(t => {
    if (t === '|') return '<span class="sep"></span>';
    if (t === '||') return '<span class="split"></span>';
    if (t === 'v') return `<button class="caret" aria-label="更多">${caret}</button>`;
    if (t === 'o') return `<button class="caret low" aria-label="选项">${caret}</button>`;
    if (t === '$') return `<button class="on wide">$${caret}</button>`;
    if (/[^a-z0-9:]/.test(t)) return `<button>${t}</button>`;
    const [id, cls] = t.split(':');
    return `<button class="${cls || ''}" aria-label="${id}"><svg><use href="#${id}"/></svg></button>`;
}).join('');

// bars: high, body top, body bottom, low; negative high marks a falling bar
const bars = [
    [617,635,636,640],[-632,634,638,642],[-607,607,614,627],[603,608,614,616],[593,603,604,604],[590,596,600,602],[-591,596,597,600],[592,594,598,600],[604,604,608,614],[590,596,603,604],
    [568,572,590,597],[569,572,573,580],[-570,570,585,590],[-579,584,588,589],[583,587,603,603],[-580,588,589,592],[570,573,588,588],[565,573,574,575],[556,568,571,571],[-566,568,580,580],
    [-558,563,572,578],[549,557,572,572],[552,556,558,563],[-556,556,562,567],[551,555,562,567],[550,550,555,558],[-521,525,538,548],[521,529,538,538],[508,516,520,525],[-513,515,522,522],
    [-520,522,525,526],[513,517,524,525],[471,475,499,499],[456,461,475,481],[446,450,453,457],[-438,450,451,451],[444,447,450,451],[436,438,447,448],[437,441,450,450],[426,437,441,443],
    [357,362,419,419],[345,360,363,364],[-359,360,362,373],[-356,363,366,367],[-357,368,395,402],[-391,394,408,410],[388,400,408,423],[-380,398,411,413],[-407,411,415,418],[-412,416,426,426],
    [-385,397,404,415],[-395,404,405,412],[378,394,395,402],[380,388,389,394],[370,378,379,380],[-375,377,378,386],[-359,371,391,395],[366,367,391,393],[318,332,344,344],[-331,331,344,352],
    [-339,345,346,348],[-346,346,353,365],[-358,367,390,390],[-383,389,390,397],[-371,377,399,402],[384,387,397,402],[-386,386,401,402],[-397,401,415,420],[422,435,450,450],[414,418,434,436],
    [358,384,386,391],[374,382,384,388],[-380,381,391,393],[372,380,391,391],[-349,352,355,363],[342,347,355,363],[-337,339,350,353],[343,346,348,353],[302,304,346,347],[-293,304,322,327],
    [312,313,333,338],[-301,313,314,320],[-319,321,322,328],[-320,321,328,330],[322,325,327,328],[314,322,325,328],[-298,309,310,321],[283,286,309,309],[-290,293,295,310],[-294,296,317,317],
    [-319,319,325,338],[-323,326,333,335],[314,324,334,342],[310,323,325,326],[291,293,327,328],[-292,294,303,303],[290,294,302,304],[272,289,294,297],[-304,322,326,326],[-325,327,345,349],
    [-332,337,338,354],[-335,338,339,343],[-334,339,343,347],[-332,343,351,351],[292,305,334,336],[301,304,305,319],[333,335,340,359],[329,333,335,337],[313,314,332,333],[302,302,313,318],
    [-252,280,292,293],[279,288,292,300],[289,300,302,308],[287,290,299,300],[284,284,289,290],[-275,284,288,289],[263,267,312,316],[260,263,267,276],[141,147,245,246],[-143,147,154,158],
    [-149,153,167,170],[-165,166,171,180],[-161,173,188,195],[182,185,188,198],[-187,195,204,208],[-200,204,210,213],[204,209,211,216],[192,206,209,209],[179,194,203,216],[-187,193,216,226],
    [-215,220,221,236],[214,220,223,223],[-212,220,222,225],[-220,223,242,243],[-280,280,336,352],[320,326,336,343],[-326,329,347,348],[334,343,347,348],[329,342,343,345],[326,340,341,342],
    [328,341,343,374],[331,338,340,346],[313,319,331,337],[-317,319,328,332],[310,316,327,331],[-312,314,317,318],[255,277,295,296],[-264,276,282,287],[-246,269,286,293],[-284,286,289,294],
    [281,285,287,301],[-280,285,294,294],[287,292,304,354],[-289,291,293,303],[-310,310,327,336],[306,307,326,329],[-305,307,316,317],[-308,316,340,344],[-292,310,311,315],[283,291,310,321],
    [221,229,254,258],[-229,229,254,254],[243,246,254,254],[238,242,244,245],[242,244,249,276],[-244,244,257,257],[-241,250,253,256],[-250,253,254,256],[238,242,255,258],[-241,242,251,256],
    [-205,205,224,237],[201,220,225,225],[181,186,188,200],[161,173,185,188],[164,169,171,175],[-163,167,181,182],[141,141,146,168],[140,141,142,152]
];

const X = i => 29.5 + i * 8.787;

function line(points, color, width, extra) {
    return `<polyline points="${points}" fill="none" stroke="${color}" stroke-width="${width}" ${extra || ''}/>`;
}
function seg(x1, y1, x2, y2, color, width) {
    return line(`${x1},${y1} ${x2},${y2}`, color, width || 1, 'shape-rendering="crispEdges"');
}
function text(x, y, s, cls) {
    return `<text x="${x}" y="${y}" class="${cls || ''}">${s}</text>`;
}
function marks(from, to, top, base, color) {
    let d = '';
    for (let i = from; i <= to; i++) {
        d += `M${X(i) - 4.5} ${base}L${X(i)} ${top}L${X(i) + 4.5} ${base}Z`;
    }
    return `<path d="${d}" fill="${color}"/>` + seg(X(from) - 4, base, X(to) + 4, base, color);
}
function signal(x, y) {
    return `<use href="#signal" x="${x}" y="${y}" width="8" height="9"/>`;
}
function candles() {
    return bars.map(([h, top, bottom, low], i) => {
        const x = Math.round(X(i)) + 0.5;
        const color = h < 0 ? '#5cfcfc' : '#c81818';
        const fill = h < 0 ? '#5cfcfc' : '#100000';
        return `<path d="M${x} ${Math.abs(h)}V${low}" stroke="${color}"/><rect x="${x - 3}" y="${top + 0.5}" width="6" height="${Math.max(bottom - top, 1)}" fill="${fill}" stroke="${color}"/>`;
    }).join('');
}

const area = '25,603 62,601 96,599 109,598 129,596 152,595 196,590 223,588 268,584 290,582 312,579 339,572 370,564 402,552 429,542 464,532 500,518 531,510 558,499 603,483 634,474 665,466 709,450 729,441 750,433 782,422 804,413 843,399 889,382 929,371 961,362 982,356 1031,340 1053,331 1082,319 1110,304 1147,288 1196,270 1220,264 1265,254 1310,244 1347,233 1388,222 1433,212 1473,199 1514,188 1543,181 1563,173 1585,168 1585,651 25,651';
const dates = [[0,'07/24'],[10,'26'],[16,'27'],[22,'28'],[28,'31'],[34,'08/01'],[40,'02'],[46,'03'],[52,'04'],[58,'07'],[64,'08'],[70,'09'],[76,'10'],[82,'11'],[88,'14'],[94,'15'],[100,'16'],[106,'17'],[112,'18'],[124,'22'],[130,'23'],[136,'24'],[142,'25'],[148,'28'],[154,'29'],[160,'30'],[166,'31'],[172,'09/01']];

let m = `<polygon points="${area}" fill="#ff9632" shape-rendering="crispEdges"/>`;
m += text(1537, 142, '3655', 'hot');
m += marks(5, 9, 132, 141, '#ffff10') + marks(10, 158, 132, 141, '#f01010');
m += line('25,635 91,635 99,590 196,590 205,556 294,556 301,508 355,508 363,437 399,437 407,348 557,348 565,319 725,319 732,293 891,293 899,272 1023,272 1031,253 1101,252 1110,141 1480,142 1488,221 1585,221', '#b01c20', 1, 'stroke-dasharray="6 3"');
m += line('639,651 645,450 945,450 952,355 1585,355', '#60c818', 1, 'stroke-dasharray="6 3"');
m += `<g shape-rendering="crispEdges">${candles()}</g>`;
m += marks(173, 177, 132, 141, '#ffff10');
m += line('631,651 635,450 1436,450 1444,374 1471,374 1479,276 1585,276', '#ffff20', 2);
m += line('268,651 275,527 311,526 319,482 530,482 539,345 671,345 679,367 846,367 855,327 997,327 1005,302 1304,302 1312,298 1427,298 1436,258 1585,258', '#e018e0', 3);
m += line('629,651 636,318 1436,318 1444,141 1471,141 1479,238 1585,238', '#d81414', 2);
m += line('418,651 424,380 610,380 619,397 891,397 899,324 1585,324', '#68f4f0', 3);
// crosshair
m += seg(25, 198.5, 1473, 198.5, '#fff') + seg(1473, 198.5, 1585, 198.5, '#50646c') + seg(1585, 198.5, 1598, 198.5, '#fff');
m += seg(1031.5, 131, 1031.5, 340, '#fff') + seg(1031.5, 340, 1031.5, 645, '#50646c');
m += seg(1585, 200.5, 1598, 200.5, '#808080', 3) + seg(1585, 240.5, 1598, 240.5, '#808080', 3);
m += `<svg x="1585" y="180" width="13" height="60">${text(-3, 15, '357', 'hot')}${text(-1, 55, '7', 'hot')}</svg>`;
m += seg(1516, 654.5, 1598, 654.5, '#444', 4);
m += signal(832, 646) + signal(1518, 646);
// time axis
m += seg(25, 657.5, 1633, 657.5, '#a01818') + seg(25, 674.5, 1633, 674.5, '#a01818') + seg(1598.5, 125, 1598.5, 675, '#a01818');
dates.forEach(([i, s]) => m += seg(X(i), 658, X(i), 674, '#a01818') + text(X(i) + 1, 671, s));
m += `<rect x="1032" y="658" width="79" height="16" fill="#000080"/>` + text(1032, 671, '08/18 14:00', 'hot') + text(1602, 671, '60分');
// price axis
[[3500, 261], [3400, 345], [3300, 429], [3200, 513], [3100, 597]].forEach(([p, y]) => m += seg(1599, y + 0.5, 1603, y + 0.5, '#a01818') + text(1603, y + 5, p));
m += `<path d="M1599 139l5-6h29v12h-29z" fill="#fff"/>` + text(1603, 144, '3646');
m += `<rect x="1599.5" y="172.5" width="33" height="26" fill="#000080" stroke="#a01818"/>` + text(1602, 183, '3328', 'hot') + text(1602, 196, '3575', 'hot');
document.getElementById('main').innerHTML = m;

let s = marks(0, 177, 693, 702, '#f01010');
s += `<path d="M25.5 1026h8l-4 9z" fill="#10ff20"/>` + marks(1, 25, 1026, 1035, '#e81010') + marks(26, 40, 1035, 1026, '#10ff20') + marks(41, 45, 1026, 1035, '#e81010') + marks(46, 115, 1035, 1026, '#10ff20') + marks(116, 139, 1026, 1035, '#e81010') + marks(140, 171, 1035, 1026, '#10ff20') + marks(172, 177, 1026, 1035, '#e81010');
s += line('29,1037 636,1037 644,870 943,870 953,815 1417,815 1418,816 1585,816', '#909090', 2);
s += line('98,975 197,975 205,950 294,950 301,931 355,931 364,904 399,904 408,862 557,862 565,812 636,812', '#fff', 2);
s += line('636,812 725,812 733,794 891,794 900,781', '#ddd', 1, 'stroke-dasharray="5 3"') + line('900,781 944,781', '#fff', 2) + line('944,781 1024,781 1031,770 1103,770 1110,757', '#ddd', 1, 'stroke-dasharray="5 3"') + line('1110,757 1251,757', '#fff', 2) + line('1251,757 1417,757', '#ddd', 1, 'stroke-dasharray="5 3"');
s += line('29,975 92,975 99,950 197,950 205,931 294,931 301,904 355,904 364,862 399,862 408,812 557,812 565,794 725,794 733,781 891,781 900,770 1024,770 1031,757 1103,757 1110,694 1480,694 1488,739 1585,739', '#ffff60', 2);
s += seg(1031.5, 692, 1031.5, 1038, '#fff') + seg(1598.5, 692, 1598.5, 1046, '#a01818');
[[3600, 715], [3400, 811], [3200, 906], [3000, 1001]].forEach(([p, y]) => s += seg(1599, y + 0.5, 1603, y + 0.5, '#a01818') + text(1603, y + 5, p));
document.getElementById('sub').innerHTML = s;

// time, price, direction, volume (+ bought / - sold side), position change
const ticks = [
    ['22:59',3647,'',-88,-56],[':48',3647,'u',6,-5],[':48',3646,'d',-46,-37],[':49',3647,'u',16,6],[':49',3646,'d',-25,21],[':50',3647,'u',20,-3],[':50',3647,'',6,-4],[':51',3646,'d',-59,4],[':51',3645,'',-157,-98],
    [':52',3645,'u',69,-27],[':52',3645,'',24,-17],[':53',3644,'d',-36,-33],[':53',3644,'u',23,-13],[':54',3644,'',41,-34],[':54',3644,'',32,-17],[':55',3645,'',20,-5],[':55',3645,'d',-18,-16],
    [':56',3644,'u',24,1],[':56',3644,'',30,-14],[':57',3646,'',47,-6],[':57',3647,'',24,10],[':58',3646,'d',-50,-26],[':58',3647,'u',6,-5],[':59',3646,'d',-13,-12],[':59',3646,'',-10,-8]
];
const arrows = { u: 'M4.500 13V1M1 5l3.500-4L8 5', d: 'M4.500 1v12M1 9l3.500 4L8 9' };
document.getElementById('ticks').innerHTML = ticks.map(([t, p, dir, vol, chg]) =>
    `<tr><td>${t}</td><td class="r">${p}</td><td class="${dir === 'u' ? 'r' : 'g'}">${dir ? `<svg viewBox="0 0 9 14"><path d="${arrows[dir]}"/></svg>` : ''}</td><td class="${vol < 0 ? 'g' : 'r'}">${Math.abs(vol)}</td><td class="${chg < 0 ? 'g' : 'r'}">${chg}</td></tr>`
).join('');

document.getElementById('qtabs').innerHTML += [...'细势盘价逆成龙财'].map((c, i) =>
    `<button class="tab ${i ? '' : 'first'}">${c}</button><svg class="edge" viewBox="0 0 8 14"><path d="${i < 7 ? 'M0 14L4 0l4 14M4 .5h4' : 'M0 14L5 0M0 .5h5'}"/></svg>`
).join('');
```
